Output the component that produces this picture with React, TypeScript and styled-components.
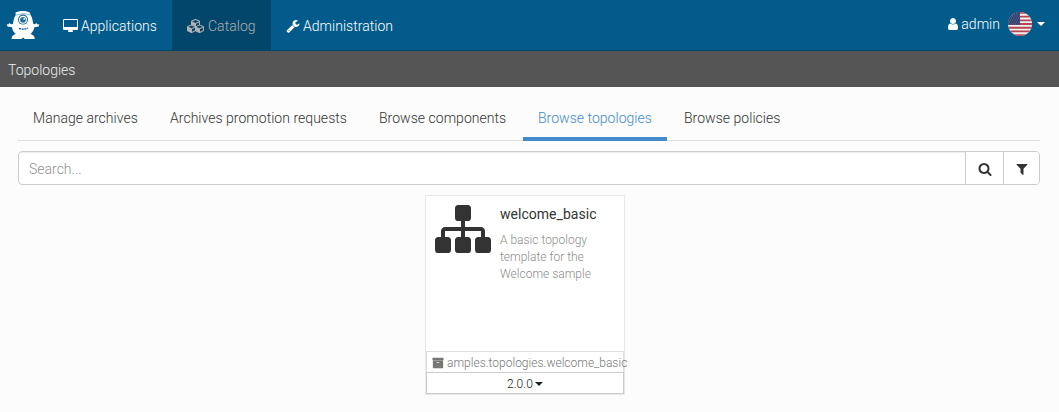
import React from "react";
import styled, { createGlobalStyle } from "styled-components";

const GlobalStyle = createGlobalStyle`
  * { box-sizing: border-box; }
  body {
    margin: 0;
    background: #fcfcfc;
    color: #333;
    font-family: Roboto, "Liberation Sans", sans-serif;
    font-weight: 300;
    font-size: 14px;
    line-height: 20px;
    letter-spacing: 0.03px;
  }
`;

const paths = {
  desktop:
    "M1792 992v-832q0-13-9.5-22.5t-22.5-9.5h-1600q-13 0-22.5 9.5t-9.5 22.5v832q0 13 9.5 22.5t22.5 9.5h1600q13 0 22.5-9.5t9.5-22.5zm128-832v1088q0 66-47 113t-113 47h-544q0 37 16 77.5t32 71 16 43.5q0 26-19 45t-45 19h-512q-26 0-45-19t-19-45q0-14 16-44t32-70 16-78h-544q-66 0-113-47t-47-113v-1088q0-66 47-113t113-47h1600q66 0 113 47t47 113z",
  cubes:
    "M640 1632l384-192v-314l-384 164v342zm-64-454l404-173-404-173-404 173zm1088 454l384-192v-314l-384 164v342zm-64-454l404-173-404-173-404 173zm-448-293l384-165v-266l-384 164v267zm-64-379l441-189-441-189-441 189zm1088 518v416q0 36-19 67t-52 47l-448 224q-25 14-57 14t-57-14l-448-224q-4-2-7-4-2 2-7 4l-448 224q-25 14-57 14t-57-14l-448-224q-33-16-52-47t-19-67v-416q0-38 21.5-70t56.5-48l434-186v-400q0-38 21.5-70t56.5-48l448-192q23-10 50-10t50 10l448 192q35 16 56.5 48t21.5 70v400l434 186q36 16 57 48t21 70z",
  wrench:
    "M448 1472q0-26-19-45t-45-19-45 19-19 45 19 45 45 19 45-19 19-45zm644-420l-682 682q-37 37-90 37-52 0-91-37l-106-108q-38-36-38-90 0-53 38-91l681-681q39 98 114.5 173.5t173.5 114.5zm634-435q0 39-23 106-47 134-164.5 217.5t-258.5 83.5q-185 0-316.5-131.5t-131.5-316.5 131.5-316.5 316.5-131.5q58 0 121.5 16.5t107.5 46.5q16 11 16 28t-16 28l-293 169v224l193 107q5-3 79-48.5t135.5-81 70.5-35.5q15 0 23.5 10t8.5 25z",
  user: "M1536 1399q0 109-62.5 187t-150.5 78h-854q-88 0-150.5-78t-62.5-187q0-85 8.5-160.5t31.5-152 58.5-131 94-89 134.5-34.5q131 128 313 128t313-128q76 0 134.5 34.5t94 89 58.5 131 31.5 152 8.5 160.5zm-256-887q0 159-112.5 271.5t-271.5 112.5-271.5-112.5-112.5-271.5 112.5-271.5 271.5-112.5 271.5 112.5 112.5 271.5z",
  search:
    "M1216 832q0-185-131.5-316.5t-316.5-131.5-316.5 131.5-131.5 316.5 131.5 316.5 316.5 131.5 316.5-131.5 131.5-316.5zm512 832q0 52-38 90t-90 38q-54 0-90-38l-343-342q-179 124-399 124-143 0-273.5-55.5t-225-150-150-225-55.5-273.5 55.5-273.5 150-225 225-150 273.5-55.5 273.5 55.5 225 150 150 225 55.5 273.5q0 220-124 399l343 343q37 37 37 90z",
  filter:
    "M1595 295q17 41-14 70l-493 493v742q0 42-39 59-13 5-25 5-27 0-45-19l-256-256q-19-19-19-45v-486l-493-493q-31-29-14-70 17-39 59-39h1280q42 0 59 39z",
  sitemap:
    "M1792 1248v320q0 40-28 68t-68 28h-320q-40 0-68-28t-28-68v-320q0-40 28-68t68-28h96v-192h-512v192h96q40 0 68 28t28 68v320q0 40-28 68t-68 28h-320q-40 0-68-28t-28-68v-320q0-40 28-68t68-28h96v-192h-512v192h96q40 0 68 28t28 68v320q0 40-28 68t-68 28h-320q-40 0-68-28t-28-68v-320q0-40 28-68t68-28h96v-192q0-52 38-90t90-38h512v-192h-96q-40 0-68-28t-28-68v-320q0-40 28-68t68-28h320q40 0 68 28t28 68v320q0 40-28 68t-68 28h-96v192h512q52 0 90 38t38 90v192h96q40 0 68 28t28 68z",
  archive:
    "M1088 832q0-26-19-45t-45-19h-256q-26 0-45 19t-19 45 19 45 45 19h256q26 0 45-19t19-45zm576-192v960q0 26-19 45t-45 19h-1408q-26 0-45-19t-19-45v-960q0-26 19-45t45-19h1408q26 0 45 19t19 45zm64-448v256q0 26-19 45t-45 19h-1536q-26 0-45-19t-19-45v-256q0-26 19-45t45-19h1536q26 0 45 19t19 45z",
};

const Glyph = styled.svg`
  display: block;
  flex: none;
  fill: currentColor;
`;

type IconProps = { name: keyof typeof paths; size?: number; units?: number };

const Icon = ({ name, size = 14, units = 1792 }: IconProps) => (
  <Glyph width={(size * units) / 1792} height={size} viewBox={`0 0 ${units} 1792`}>
    <path d={paths[name]} />
  </Glyph>
);

const Navbar = styled.nav`
  display: flex;
  height: 51px;
  background: #035b8b;
  border-bottom: 1px solid #02466b;
  color: #fff;
`;

const Brand = styled.a`
  width: 48px;
  padding: 10px 0 0 6px;
`;

const NavItem = styled.a<{ $width: number; $active?: boolean }>`
  display: flex;
  align-items: center;
  gap: 3px;
  width: ${(p) => p.$width}px;
  height: 50px;
  padding: 2px 0 0 15px;
  white-space: nowrap;
  background: ${(p) => (p.$active ? "#02466b" : "transparent")};
  color: ${(p) => (p.$active ? "#b0b0b0" : "#fff")};
`;

const UserMenu = styled.div`
  display: flex;
  align-items: center;
  height: 48px;
  margin-left: auto;
  padding-right: 14px;
`;

const UserName = styled.span`
  margin: 0 8px 0 1px;
`;

const Caret = styled.span<{ $gap: number }>`
  width: 8px;
  margin-left: ${(p) => p.$gap}px;
  border: 4px solid transparent;
  border-top-color: currentColor;
  border-bottom: 0;
`;

const Breadcrumb = styled.div`
  height: 36px;
  padding: 9px 8px;
  background: #555;
  color: #eee;
  letter-spacing: 0;
`;

const Content = styled.main`
  padding: 9px 19px 0 18px;
`;

const Tabs = styled.div`
  display: flex;
  gap: 2px;
  height: 45px;
  border-bottom: 1px solid #ddd;
`;

const Tab = styled.a<{ $width: number; $active?: boolean }>`
  width: ${(p) => p.$width}px;
  height: 45px;
  padding: 12px 0 0 15px;
  white-space: nowrap;
  border-bottom: 4px solid ${(p) => (p.$active ? "#428bca" : "transparent")};
  color: ${(p) => (p.$active ? "#428bca" : "#333")};
`;

const SearchBar = styled.div`
  display: flex;
  height: 34px;
  margin-top: 10px;
  overflow: hidden;
  background: #fff;
  border: 1px solid #ccc;
  border-radius: 4px;
`;

const SearchInput = styled.input`
  flex: 1;
  padding: 2px 10px 0;
  border: 0;
  outline: 0;
  background: transparent;
  box-shadow: inset 0 1px 1px rgba(0, 0, 0, 0.075);
  font: inherit;
  &::placeholder { color: #8f8f8f; opacity: 1; }
`;

const SearchButton = styled.button<{ $width: number }>`
  display: flex;
  align-items: center;
  justify-content: center;
  width: ${(p) => p.$width}px;
  padding: 2px 0 0;
  border: 0;
  border-left: 1px solid #ccc;
  background: #fff;
  color: #333;
`;

const Card = styled.article`
  display: flex;
  flex-direction: column;
  width: 200px;
  height: 200px;
  margin: 10px auto 0 407px;
  background: #fff;
  border: 1px solid #e8e8e8;
`;

const CardBody = styled.div`
  display: flex;
  flex: 1;
  gap: 9px;
  padding: 5px 0 0 9px;
`;

const CardText = styled.div`
  padding-top: 3px;
`;

const CardTitle = styled.h4`
  margin: 0;
  font-size: 14px;
  font-weight: 400;
  line-height: 20px;
`;

const CardDescription = styled.p`
  width: 104px;
  margin: 8px 0 0;
  color: #8c8c8c;
  font-size: 12px;
  line-height: 17px;
  letter-spacing: 0;
`;

const ArchiveRow = styled.div`
  display: flex;
  align-items: center;
  gap: 3px;
  height: 21px;
  padding: 2px 0 0 5px;
  border: 1px solid #ddd;
  border-bottom: 0;
  color: #777;
  font-size: 12px;
  letter-spacing: 0;
  white-space: nowrap;
`;

const VersionRow = styled.div`
  display: flex;
  align-items: center;
  justify-content: center;
  height: 22px;
  padding-top: 1px;
  border: 1px solid #ccc;
  color: #222;
  font-size: 12px;
  letter-spacing: 0.1px;
`;

const Mascot = () => (
  <svg width="34" height="30" viewBox="0 0 34 30">
    <path
      fill="#fff"
      d="M9.5 2.6C13 .6 21 .4 23.7 2.6L24.6 5C26.4 7.5 26.6 11 27.4 14L29.3 14.3 30.2 12.8 31.2 14.2 33.4 14.6 32.6 16.6 28.3 17.2C28 20.5 26 22.5 24.5 24Q28.6 25 28.8 29H18.8L17 27.6 15.3 29H5.5Q5.6 25 9.8 24C8 22.5 6.3 20.5 6 17.2L1.6 16.6 .7 14.6 2.7 14.2 3.6 12.8 4.8 14.3 6.8 14C7.6 11 7.8 7.5 9.8 5Z"
    />
    <path d="M9.6 5.2Q17 2.2 24.6 4.8" fill="none" stroke="#7baac5" strokeWidth=".8" />
    <circle cx="17" cy="9.6" r="5" fill="#1b6a95" />
    <circle cx="17" cy="9.8" r="4" fill="#fff" />
    <circle cx="17" cy="9.8" r="2.9" fill="#267098" />
    <circle cx="18.2" cy="8.8" r=".9" fill="#fff" />
    <path d="M13 18.3Q17 20 22 18" fill="none" stroke="#035b8b" strokeWidth="1.4" strokeDasharray="2 .8" />
  </svg>
);

const Flag = () => (
  <svg width="24" height="24" viewBox="0 0 24 24">
    <clipPath id="disc">
      <circle cx="12" cy="12" r="12" />
    </clipPath>
    <g clipPath="url(#disc)">
      <path fill="#f2f0f2" d="M0 0h24v24H0z" />
      <path
        stroke="#b8444f"
        strokeWidth="1.85"
        d="M0 .9h24M0 4.6h24M0 8.3h24M0 12h24M0 15.7h24M0 19.4h24M0 23.1h24"
      />
      <path fill="#2f3d6c" d="M0 0h12v12.8H0z" />
      <path
        stroke="#8f9aba"
        strokeWidth=".8"
        strokeDasharray=".9 1.5"
        d="M6 2h6M4 4h8M3 6h9M2 8h10M1 10h11M0 12h12"
      />
    </g>
  </svg>
);

export default function App() {
  return (
    <>
      <GlobalStyle />
      <Navbar>
        <Brand>
          <Mascot />
        </Brand>
        <NavItem $width={124}>
          <Icon name="desktop" units={1920} />
          <span>Applications</span>
        </NavItem>
        <NavItem $width={99} $active>
          <Icon name="cubes" units={2304} />
          <span>Catalog</span>
        </NavItem>
        <NavItem $width={137}>
          <Icon name="wrench" />
          <span>Administration</span>
        </NavItem>
        <UserMenu>
          <Icon name="user" />
          <UserName>admin</UserName>
          <Flag />
          <Caret $gap={5} />
        </UserMenu>
      </Navbar>
      <Breadcrumb>Topologies</Breadcrumb>
      <Content>
        <Tabs>
          <Tab $width={135}>Manage archives</Tab>
          <Tab $width={207}>Archives promotion requests</Tab>
          <Tab $width={157}>Browse components</Tab>
          <Tab $width={144} $active>Browse topologies</Tab>
          <Tab $width={126}>Browse policies</Tab>
        </Tabs>
        <SearchBar>
          <SearchInput placeholder="Search..." />
          <SearchButton $width={38}>
            <Icon name="search" />
          </SearchButton>
          <SearchButton $width={36}>
            <Icon name="filter" />
          </SearchButton>
        </SearchBar>
        <Card>
          <CardBody>
            <Icon name="sitemap" size={56} />
            <CardText>
              <CardTitle>welcome_basic</CardTitle>
              <CardDescription>A basic topology template for the Welcome sample</CardDescription>
            </CardText>
          </CardBody>
          <ArchiveRow>
            <Icon name="archive" size={12} />
            <span>amples.topologies.welcome_basic</span>
          </ArchiveRow>
          <VersionRow>
            <span>2.0.0</span>
            <Caret $gap={2} />
          </VersionRow>
        </Card>
      </Content>
    </>
  );
}
